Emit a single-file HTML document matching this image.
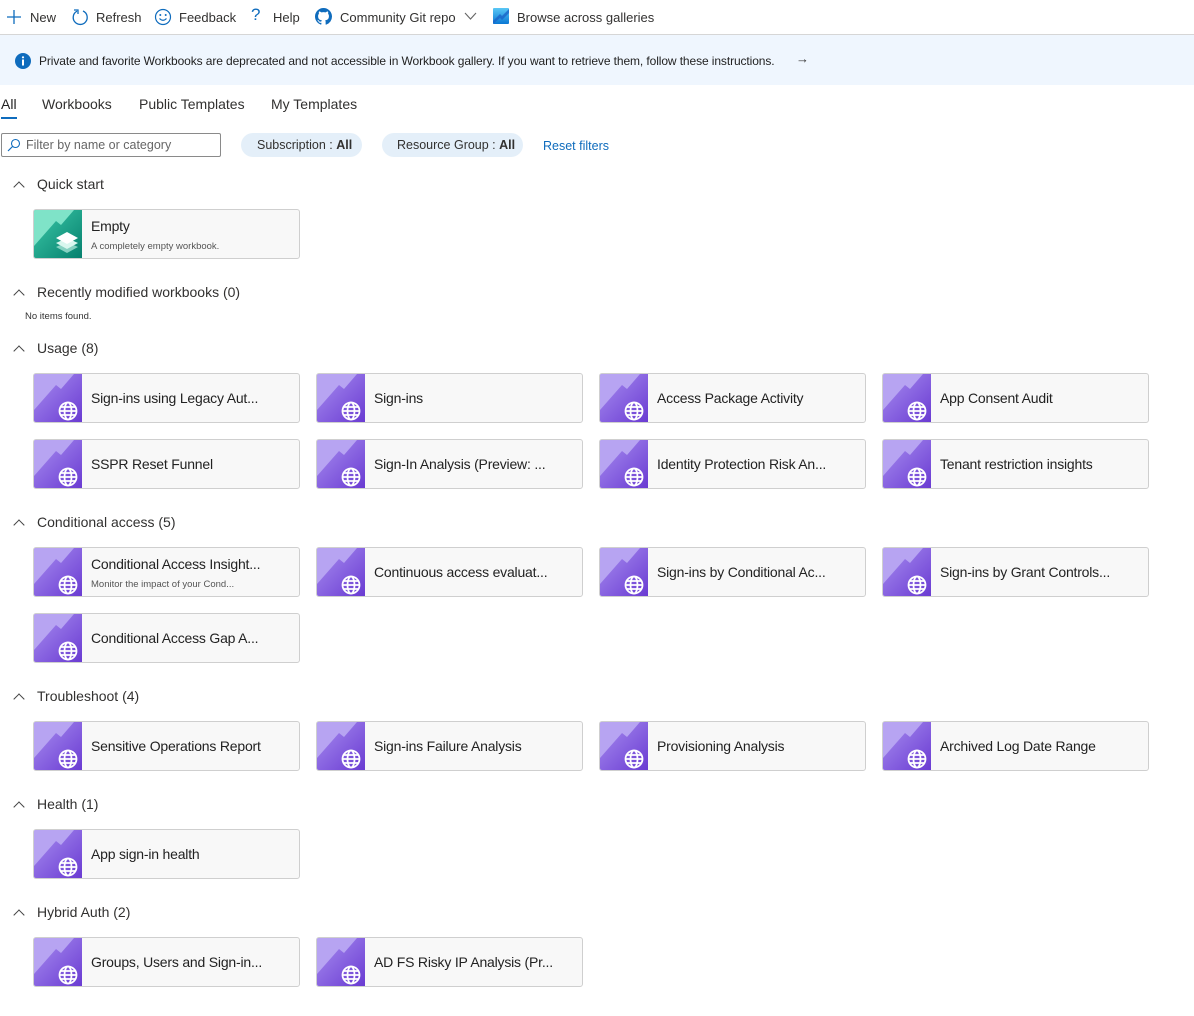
<!DOCTYPE html>
<html><head><meta charset="utf-8"><style>
*{box-sizing:border-box;margin:0;padding:0}
body{width:1194px;height:1016px;background:#fff;font-family:"Liberation Sans",sans-serif;color:#323130;position:relative;overflow:hidden}
.a{position:absolute;white-space:nowrap}
.tb{font-size:13px;top:10px}
.sec{font-size:14px}
.chev{position:absolute;width:8px;height:8px;border-left:1.3px solid #444;border-top:1.3px solid #444;transform:rotate(45deg)}
.card{position:absolute;width:267px;height:50px;background:#f8f8f8;border:1px solid #cfcfcf;border-radius:3px;overflow:hidden}
.card svg{position:absolute;left:0;top:0}
.card .t{position:absolute;left:57px;top:16px;font-size:14px;color:#222;letter-spacing:-.2px}
.card .t2{top:8px}
.card .s{position:absolute;left:57px;top:31px;font-size:9.5px;color:#555}
</style></head><body>
<svg width="0" height="0" style="position:absolute"><defs>
<linearGradient id="pg" x1="0" y1="0" x2="1" y2="1"><stop offset="0" stop-color="#a88ef0"/><stop offset="1" stop-color="#6a3bd2"/></linearGradient>
<linearGradient id="gg" x1="0" y1="0" x2="1" y2="1"><stop offset="0" stop-color="#3cc9a8"/><stop offset="1" stop-color="#06806e"/></linearGradient>
<symbol id="wb" viewBox="0 0 48 48"><rect width="48" height="48" fill="url(#pg)"/><polygon points="0,0 40,0 27,15 22,11 0,36" fill="#b7a4f2"/><g fill="none" stroke="#fff" stroke-width="1.8"><circle cx="34" cy="37" r="8.5"/><ellipse cx="34" cy="37" rx="3.5" ry="8.5"/><line x1="25.5" y1="37" x2="42.5" y2="37"/><line x1="27" y1="33" x2="41" y2="33"/><line x1="27" y1="41" x2="41" y2="41"/></g></symbol>
</defs></svg>

<!-- toolbar -->
<svg class="a" style="left:6px;top:9px" width="16" height="16"><path d="M8 1v14M1 8h14" stroke="#0f6cbd" stroke-width="1.3"/></svg>
<div class="a tb" style="left:30px">New</div>
<svg class="a" style="left:71px;top:8px" width="18" height="18"><path d="M6 3.2A7 7 0 1 0 12 3" fill="none" stroke="#0f6cbd" stroke-width="1.3"/><path d="M3 2h4v4" fill="none" stroke="#0f6cbd" stroke-width="1.3"/></svg>
<div class="a tb" style="left:96px">Refresh</div>
<svg class="a" style="left:154px;top:8px" width="18" height="18"><circle cx="9" cy="9" r="7.5" fill="none" stroke="#0f6cbd" stroke-width="1.2"/><circle cx="6.3" cy="7" r="1" fill="#0f6cbd"/><circle cx="11.7" cy="7" r="1" fill="#0f6cbd"/><path d="M5.5 10.5q3.5 3.5 7 0" fill="none" stroke="#0f6cbd" stroke-width="1.2"/></svg>
<div class="a tb" style="left:179px">Feedback</div>
<div class="a" style="left:251px;top:5px;font-size:17px;color:#0f6cbd">?</div>
<div class="a tb" style="left:273px">Help</div>
<svg class="a" style="left:315px;top:8px" width="17" height="17" viewBox="0 0 16 16"><path fill="#0f6cbd" d="M8 0C3.58 0 0 3.58 0 8c0 3.54 2.29 6.530 5.47 7.59.4.07.55-.17.55-.38v-1.33c-2.23.48-2.7-1.07-2.7-1.07-.36-.92-.89-1.170-.89-1.17-.73-.5.06-.49.06-.49.8.06 1.23.83 1.23.83.71 1.22 1.87.87 2.33.66.07-.52.28-.87.5-1.07-1.78-.2-3.64-.89-3.64-3.95 0-.87.31-1.59.82-2.15-.08-.2-.36-1.02.08-2.12 0 0 .67-.21 2.2.82a7.6 7.6 0 0 1 4 0c1.53-1.04 2.2-.82 2.2-.82.44 1.1.16 1.92.08 2.12.51.56.82 1.27.82 2.15 0 3.07-1.87 3.75-3.65 3.95.29.25.54.73.54 1.48v2.2c0 .21.15.46.55.38A8 8 0 0 0 16 8c0-4.42-3.58-8-8-8z"/></svg>
<div class="a tb" style="left:340px">Community Git repo</div>
<svg class="a" style="left:464px;top:12px" width="13" height="9"><path d="M1 1l5.5 6L12 1" fill="none" stroke="#666" stroke-width="1.1"/></svg>
<svg class="a" style="left:493px;top:8px" width="16" height="16"><defs><linearGradient id="bl" x1="0" y1="0" x2="0" y2="1"><stop offset="0" stop-color="#5ac8f5"/><stop offset="1" stop-color="#0a78d4"/></linearGradient></defs><rect width="16" height="16" rx="1" fill="url(#bl)"/><path d="M0 13L7 6l2 2 7-7v4L9 12 7 10 0 16z" fill="#1a64c8" opacity=".8"/></svg>
<div class="a tb" style="left:517px">Browse across galleries</div>
<div class="a" style="left:0;top:34px;width:1194px;height:1px;background:#d6d6d6"></div>

<!-- banner -->
<div class="a" style="left:0;top:35px;width:1194px;height:50px;background:#eff6fe"></div>
<svg class="a" style="left:15px;top:53px" width="16" height="16"><circle cx="8" cy="8" r="8" fill="#0f6cbd"/><rect x="7" y="6.5" width="2" height="6" fill="#fff"/><circle cx="8" cy="4.3" r="1.1" fill="#fff"/></svg>
<div class="a" style="left:39px;top:54px;font-size:12px;color:#222;letter-spacing:-.1px">Private and favorite Workbooks are deprecated and not accessible in Workbook gallery. If you want to retrieve them, follow these instructions.</div>
<div class="a" style="left:796px;top:51px;font-size:13px;color:#333">→</div>

<!-- tabs -->
<div class="a" style="left:1px;top:96px;font-size:14px;color:#222">All</div>
<div class="a" style="left:1px;top:117px;width:16px;height:2px;background:#0f6cbd"></div>
<div class="a" style="left:42px;top:96px;font-size:14px">Workbooks</div>
<div class="a" style="left:139px;top:96px;font-size:14px">Public Templates</div>
<div class="a" style="left:271px;top:96px;font-size:14px">My Templates</div>

<!-- filters -->
<div class="a" style="left:1px;top:133px;width:220px;height:24px;border:1px solid #8a8a8a;border-radius:2px"></div>
<svg class="a" style="left:7px;top:138px" width="14" height="14"><circle cx="8.5" cy="5.5" r="4" fill="none" stroke="#0f6cbd" stroke-width="1.1"/><path d="M5.5 8.5L1 13" stroke="#0f6cbd" stroke-width="1.2"/></svg>
<div class="a" style="left:26px;top:138px;font-size:12.5px;color:#666">Filter by name or category</div>
<div class="a" style="left:241px;top:133px;width:121px;height:24px;background:#e4eff9;border-radius:12px"></div>
<div class="a" style="left:257px;top:138px;font-size:12.5px">Subscription : <b>All</b></div>
<div class="a" style="left:382px;top:133px;width:141px;height:24px;background:#e4eff9;border-radius:12px"></div>
<div class="a" style="left:397px;top:138px;font-size:12.5px">Resource Group : <b>All</b></div>
<div class="a" style="left:543px;top:139px;font-size:12.5px;color:#0f6cbd">Reset filters</div>

<!-- sections -->
<div class="chev" style="left:15px;top:183px"></div><div class="a sec" style="left:37px;top:176px">Quick start</div>
<div class="card" style="left:33px;top:209px"><svg width="48" height="48" viewBox="0 0 48 48"><rect width="48" height="48" fill="url(#gg)"/><polygon points="0,0 40,0 27,15 22,11 0,36" fill="#7fe3c8"/><g transform="translate(33,33)"><path d="M-11 4l11 6 11-6-11-5z" fill="#b8ece0" opacity=".7"/><path d="M-11 0l11 6 11-6-11-5z" fill="#d9f7ef"/><path d="M-11-5l11 6 11-6-11-6z" fill="#fff"/></g></svg><div class="t t2">Empty</div><div class="s">A completely empty workbook.</div></div>

<div class="chev" style="left:15px;top:291px"></div><div class="a sec" style="left:37px;top:284px">Recently modified workbooks (0)</div>
<div class="a" style="left:25px;top:311px;font-size:9.5px;color:#333">No items found.</div>

<div class="chev" style="left:15px;top:347px"></div><div class="a sec" style="left:37px;top:340px">Usage (8)</div>
<div class="card" style="left:33px;top:373px"><svg width="48" height="48"><use href="#wb"/></svg><div class="t">Sign-ins using Legacy Aut...</div></div>
<div class="card" style="left:316px;top:373px"><svg width="48" height="48"><use href="#wb"/></svg><div class="t">Sign-ins</div></div>
<div class="card" style="left:599px;top:373px"><svg width="48" height="48"><use href="#wb"/></svg><div class="t">Access Package Activity</div></div>
<div class="card" style="left:882px;top:373px"><svg width="48" height="48"><use href="#wb"/></svg><div class="t">App Consent Audit</div></div>
<div class="card" style="left:33px;top:439px"><svg width="48" height="48"><use href="#wb"/></svg><div class="t">SSPR Reset Funnel</div></div>
<div class="card" style="left:316px;top:439px"><svg width="48" height="48"><use href="#wb"/></svg><div class="t">Sign-In Analysis (Preview: ...</div></div>
<div class="card" style="left:599px;top:439px"><svg width="48" height="48"><use href="#wb"/></svg><div class="t">Identity Protection Risk An...</div></div>
<div class="card" style="left:882px;top:439px"><svg width="48" height="48"><use href="#wb"/></svg><div class="t">Tenant restriction insights</div></div>

<div class="chev" style="left:15px;top:521px"></div><div class="a sec" style="left:37px;top:514px">Conditional access (5)</div>
<div class="card" style="left:33px;top:547px"><svg width="48" height="48"><use href="#wb"/></svg><div class="t t2">Conditional Access Insight...</div><div class="s">Monitor the impact of your Cond...</div></div>
<div class="card" style="left:316px;top:547px"><svg width="48" height="48"><use href="#wb"/></svg><div class="t">Continuous access evaluat...</div></div>
<div class="card" style="left:599px;top:547px"><svg width="48" height="48"><use href="#wb"/></svg><div class="t">Sign-ins by Conditional Ac...</div></div>
<div class="card" style="left:882px;top:547px"><svg width="48" height="48"><use href="#wb"/></svg><div class="t">Sign-ins by Grant Controls...</div></div>
<div class="card" style="left:33px;top:613px"><svg width="48" height="48"><use href="#wb"/></svg><div class="t">Conditional Access Gap A...</div></div>

<div class="chev" style="left:15px;top:695px"></div><div class="a sec" style="left:37px;top:688px">Troubleshoot (4)</div>
<div class="card" style="left:33px;top:721px"><svg width="48" height="48"><use href="#wb"/></svg><div class="t">Sensitive Operations Report</div></div>
<div class="card" style="left:316px;top:721px"><svg width="48" height="48"><use href="#wb"/></svg><div class="t">Sign-ins Failure Analysis</div></div>
<div class="card" style="left:599px;top:721px"><svg width="48" height="48"><use href="#wb"/></svg><div class="t">Provisioning Analysis</div></div>
<div class="card" style="left:882px;top:721px"><svg width="48" height="48"><use href="#wb"/></svg><div class="t">Archived Log Date Range</div></div>

<div class="chev" style="left:15px;top:803px"></div><div class="a sec" style="left:37px;top:796px">Health (1)</div>
<div class="card" style="left:33px;top:829px"><svg width="48" height="48"><use href="#wb"/></svg><div class="t">App sign-in health</div></div>

<div class="chev" style="left:15px;top:911px"></div><div class="a sec" style="left:37px;top:904px">Hybrid Auth (2)</div>
<div class="card" style="left:33px;top:937px"><svg width="48" height="48"><use href="#wb"/></svg><div class="t">Groups, Users and Sign-in...</div></div>
<div class="card" style="left:316px;top:937px"><svg width="48" height="48"><use href="#wb"/></svg><div class="t">AD FS Risky IP Analysis (Pr...</div></div>
</body></html>
